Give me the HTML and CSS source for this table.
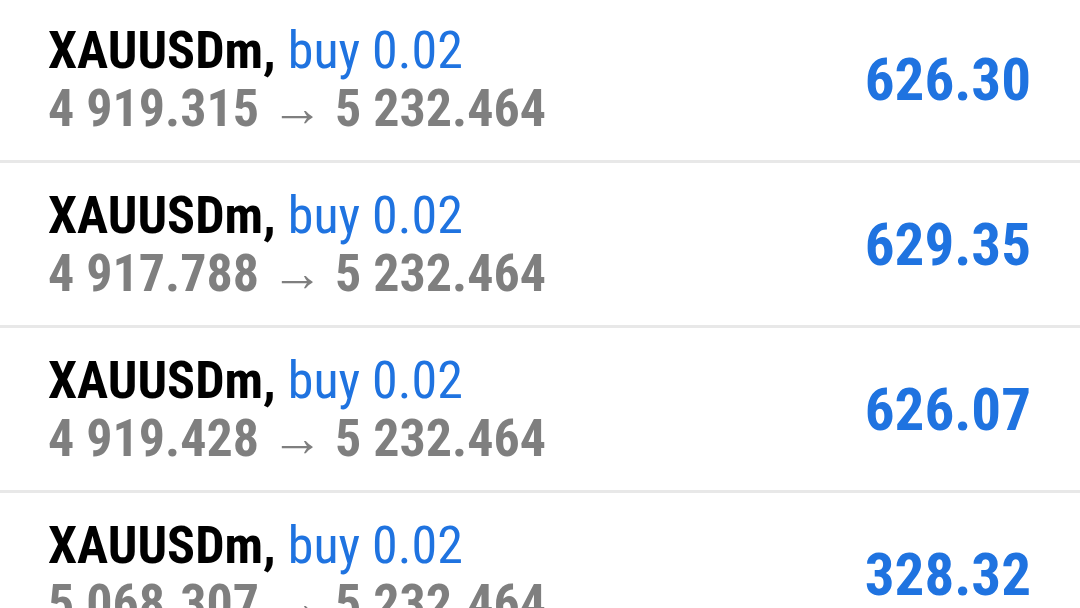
FILE: index.html
```html
<!DOCTYPE html>
<html>
<head>
<meta charset="utf-8">
<link rel="stylesheet" href="styles.css">
</head>
<body>
<ul class="trades">
  <li class="trade">
    <div class="info">
      <div class="title"><span class="symbol">XAUUSDm,</span> <span class="side">buy 0.02</span></div>
      <div class="prices">4 919.315 → 5 232.464</div>
    </div>
    <div class="profit">626.30</div>
  </li>
  <li class="trade">
    <div class="info">
      <div class="title"><span class="symbol">XAUUSDm,</span> <span class="side">buy 0.02</span></div>
      <div class="prices">4 917.788 → 5 232.464</div>
    </div>
    <div class="profit">629.35</div>
  </li>
  <li class="trade">
    <div class="info">
      <div class="title"><span class="symbol">XAUUSDm,</span> <span class="side">buy 0.02</span></div>
      <div class="prices">4 919.428 → 5 232.464</div>
    </div>
    <div class="profit">626.07</div>
  </li>
  <li class="trade">
    <div class="info">
      <div class="title"><span class="symbol">XAUUSDm,</span> <span class="side">buy 0.02</span></div>
      <div class="prices">5 068.307 → 5 232.464</div>
    </div>
    <div class="profit">328.32</div>
  </li>
</ul>
</body>
</html>
```
FILE: styles.css
```css
html, body {
  margin: 0;
  padding: 0;
  background: #ffffff;
  overflow: hidden;
}
body {
  width: 1080px;
  height: 608px;
  font-family: "Roboto Condensed", "Liberation Sans Narrow", Roboto, sans-serif;
}
.trades {
  list-style: none;
  margin: -2px 0 0 0;
  padding: 0;
}
.trade {
  display: flex;
  align-items: center;
  justify-content: space-between;
  height: 162px;
  padding: 0 49px 0 48px;
  border-bottom: 3px solid #e8e8e8;
  box-sizing: content-box;
}
.info {
  display: flex;
  flex-direction: column;
  align-self: flex-start;
  padding-top: 24px;
}
.title {
  font-size: 52px;
  line-height: 58px;
  white-space: nowrap;
}
.symbol {
  font-weight: 700;
  color: #000000;
}
.side {
  color: #1f73e0;
}
.prices {
  font-size: 52px;
  line-height: 58px;
  font-weight: 700;
  color: #7f7f7f;
  white-space: nowrap;
}
.profit {
  font-size: 59px;
  font-weight: 700;
  color: #1f73e0;
}
```
